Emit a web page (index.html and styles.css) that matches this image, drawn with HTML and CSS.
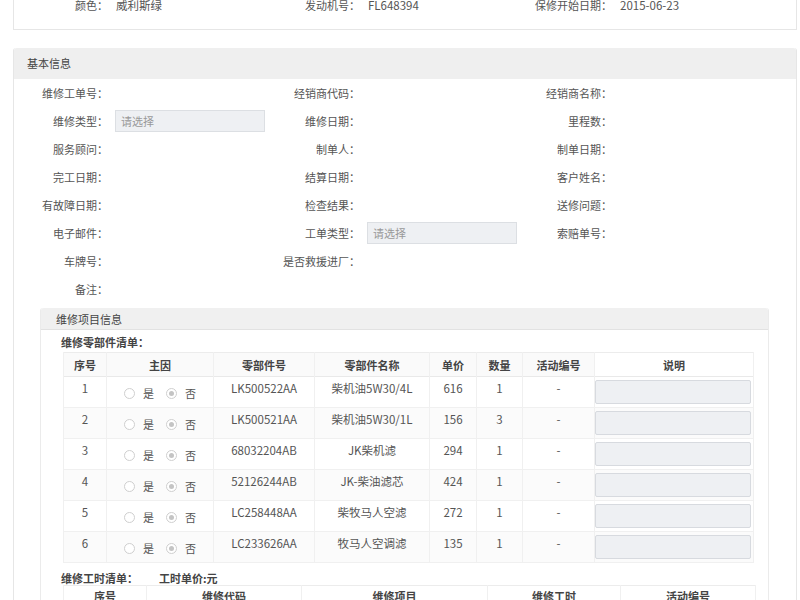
FILE: index.html
```html
<!doctype html>
<html lang="zh-CN">
<head>
    <meta charset="UTF-8">
    <title>维修工单</title>
    <link rel="stylesheet" href="styles.css">
</head>
<body>
<div class="page">
    <div class="card">
        <div class="info-row">
            <div class="field"><span class="lbl">颜色：</span><span class="val">威利斯绿</span></div>
            <div class="field"><span class="lbl">发动机号：</span><span class="val">FL648394</span></div>
            <div class="field"><span class="lbl">保修开始日期：</span><span class="val">2015-06-23</span></div>
        </div>
    </div>

    <div class="panel">
        <div class="panel-head">基本信息</div>
        <div class="panel-body">
            <div class="form-grid">
                <div class="field"><span class="lbl">维修工单号：</span></div>
                <div class="field"><span class="lbl">经销商代码：</span></div>
                <div class="field"><span class="lbl">经销商名称：</span></div>

                <div class="field"><span class="lbl">维修类型：</span><span class="select">请选择</span></div>
                <div class="field"><span class="lbl">维修日期：</span></div>
                <div class="field"><span class="lbl">里程数：</span></div>

                <div class="field"><span class="lbl">服务顾问：</span></div>
                <div class="field"><span class="lbl">制单人：</span></div>
                <div class="field"><span class="lbl">制单日期：</span></div>

                <div class="field"><span class="lbl">完工日期：</span></div>
                <div class="field"><span class="lbl">结算日期：</span></div>
                <div class="field"><span class="lbl">客户姓名：</span></div>

                <div class="field"><span class="lbl">有故障日期：</span></div>
                <div class="field"><span class="lbl">检查结果：</span></div>
                <div class="field"><span class="lbl">送修问题：</span></div>

                <div class="field"><span class="lbl">电子邮件：</span></div>
                <div class="field"><span class="lbl">工单类型：</span><span class="select">请选择</span></div>
                <div class="field"><span class="lbl">索赔单号：</span></div>

                <div class="field"><span class="lbl">车牌号：</span></div>
                <div class="field"><span class="lbl">是否救援进厂：</span></div>
                <div class="field"></div>

                <div class="field"><span class="lbl">备注：</span></div>
            </div>

            <div class="panel sub">
                <div class="panel-head">维修项目信息</div>
                <div class="panel-body">
                    <h4 class="list-title">维修零部件清单：</h4>
                    <table class="grid parts">
                        <colgroup>
                            <col style="width:43px"><col style="width:107px"><col style="width:101px"><col style="width:115px">
                            <col style="width:47px"><col style="width:46px"><col style="width:72px"><col style="width:159px">
                        </colgroup>
                        <thead>
                        <tr><th>序号</th><th>主因</th><th>零部件号</th><th>零部件名称</th><th>单价</th><th>数量</th><th>活动编号</th><th class="plain">说明</th></tr>
                        </thead>
                        <tbody>
                        <tr>
                            <td>1</td>
                            <td><div class="radios"><span class="radio"></span>是<span class="radio on"></span>否</div></td>
                            <td>LK500522AA</td><td>柴机油5W30/4L</td><td>616</td><td>1</td><td>-</td>
                            <td class="note"><span class="input"></span></td>
                        </tr>
                        <tr>
                            <td>2</td>
                            <td><div class="radios"><span class="radio"></span>是<span class="radio on"></span>否</div></td>
                            <td>LK500521AA</td><td>柴机油5W30/1L</td><td>156</td><td>3</td><td>-</td>
                            <td class="note"><span class="input"></span></td>
                        </tr>
                        <tr>
                            <td>3</td>
                            <td><div class="radios"><span class="radio"></span>是<span class="radio on"></span>否</div></td>
                            <td>68032204AB</td><td>JK柴机滤</td><td>294</td><td>1</td><td>-</td>
                            <td class="note"><span class="input"></span></td>
                        </tr>
                        <tr>
                            <td>4</td>
                            <td><div class="radios"><span class="radio"></span>是<span class="radio on"></span>否</div></td>
                            <td>52126244AB</td><td>JK-柴油滤芯</td><td>424</td><td>1</td><td>-</td>
                            <td class="note"><span class="input"></span></td>
                        </tr>
                        <tr>
                            <td>5</td>
                            <td><div class="radios"><span class="radio"></span>是<span class="radio on"></span>否</div></td>
                            <td>LC258448AA</td><td>柴牧马人空滤</td><td>272</td><td>1</td><td>-</td>
                            <td class="note"><span class="input"></span></td>
                        </tr>
                        <tr>
                            <td>6</td>
                            <td><div class="radios"><span class="radio"></span>是<span class="radio on"></span>否</div></td>
                            <td>LC233626AA</td><td>牧马人空调滤</td><td>135</td><td>1</td><td>-</td>
                            <td class="note"><span class="input"></span></td>
                        </tr>
                        </tbody>
                    </table>

                    <h4 class="list-title hours">维修工时清单：<span class="price">工时单价:元</span></h4>
                    <table class="grid labor">
                        <colgroup>
                            <col style="width:83px"><col style="width:155px"><col style="width:186px"><col style="width:133px"><col style="width:135px">
                        </colgroup>
                        <thead>
                        <tr><th>序号</th><th>维修代码</th><th>维修项目</th><th>维修工时</th><th>活动编号</th></tr>
                        </thead>
                    </table>
                </div>
            </div>
        </div>
    </div>
</div>
</body>
</html>
```

FILE: styles.css
```css
* {
    margin: 0;
    padding: 0;
    box-sizing: border-box;
}

body {
    background: #fff;
    font-family: "Noto Sans CJK SC", "Open Sans", sans-serif;
    font-size: 11.5px;
    color: #555;
}

.page {
    padding-left: 13px;
    padding-right: 3px;
}

/* 车辆信息 */
.card {
    border: 1px solid #e6e6e6;
    border-top: 0;
    padding-bottom: 18px;
}

.info-row {
    display: grid;
    grid-template-columns: 252px 252px 252px;
    height: 11px;
    line-height: 11px;
    margin-left: -1px;
}

.field {
    display: flex;
    align-items: center;
}

.lbl {
    width: 95px;
    text-align: right;
    flex-shrink: 0;
    white-space: nowrap;
    font-size: 11px;
}

.val {
    margin-left: 8px;
    color: #555;
}

/* 面板 */
.panel {
    margin-top: 18px;
    border: 1px solid #e6e6e6;
    border-top: 0;
    border-radius: 3px 3px 0 0;
}

.panel-head {
    height: 31px;
    line-height: 31px;
    background: #efefef;
    padding-left: 13px;
    font-size: 11px;
    color: #444;
    border-radius: 3px 3px 0 0;
}

.panel-body {
    padding: 0 27px 0 26px;
}

.form-grid {
    display: grid;
    grid-template-columns: 252px 252px 252px;
    grid-auto-rows: 28px;
    margin-left: -27px;
}

.select {
    margin-left: 7px;
    width: 157px;
    height: 22px;
    line-height: 20px;
    padding-left: 5px;
    background: #eef0f3;
    border: 1px solid #dcdfe3;
    font-size: 11px;
    color: #999;
}

/* 维修项目 */
.panel.sub {
    margin-top: 5px;
    border-color: #ebebeb;
}

.panel.sub .panel-head {
    height: 22px;
    line-height: 22px;
    padding-left: 15px;
    border-bottom: 1px solid #e2e2e2;
    background: #f0f0f0;
}

.panel.sub .panel-body {
    padding: 0 0 0 20px;
}

.list-title {
    font-size: 11px;
    font-weight: bold;
    color: #444;
    height: 22px;
    line-height: 24px;
}

.list-title.hours {
    margin-top: 5px;
    height: 17px;
    line-height: 20px;
}

.price {
    margin-left: 21px;
}

.grid {
    margin-left: 2px;
    width: 690px;
    border-collapse: collapse;
    table-layout: fixed;
    border-top: 1px solid #ececec;
}

.grid.labor {
    width: 692px;
}

.grid th {
    height: 24px;
    font-size: 11px;
    font-weight: bold;
    color: #444;
    background: #fafafa;
    border-left: 1px solid #f0f0f0;
    border-right: 1px solid #f0f0f0;
    text-align: center;
}

.grid.labor th {
    height: 20px;
    line-height: 20px;
    background: #fff;
}

.grid th.plain {
    background: #fff;
}

.grid td {
    height: 31px;
    padding: 4px 2px;
    line-height: 14px;
    vertical-align: top;
    text-align: center;
    color: #555;
    border: 1px solid #f0f0f0;
    border-top-color: #e9e9e9;
}

.parts tbody tr:nth-child(even) td {
    background: #fbfbfb;
}

.grid td.note {
    padding: 3px 2px 0 0;
}

.input {
    display: block;
    height: 24px;
    background: #eef0f3;
    border: 1px solid #d7dadf;
    border-radius: 2px;
}

.radios {
    line-height: 22px;
    height: 22px;
    padding-top: 2px;
    display: flex;
    align-items: center;
    justify-content: center;
    font-size: 11px;
    color: #555;
}

.radio {
    width: 11px;
    height: 11px;
    border: 1px solid #cfcfcf;
    border-radius: 50%;
    margin-right: 8px;
    background: #fff;
    position: relative;
}

.radios .radio.on {
    margin-left: 12px;
}

.radio.on::after {
    content: "";
    position: absolute;
    left: 2px;
    top: 2px;
    width: 5px;
    height: 5px;
    border-radius: 50%;
    background: #c4c4c4;
}
```
